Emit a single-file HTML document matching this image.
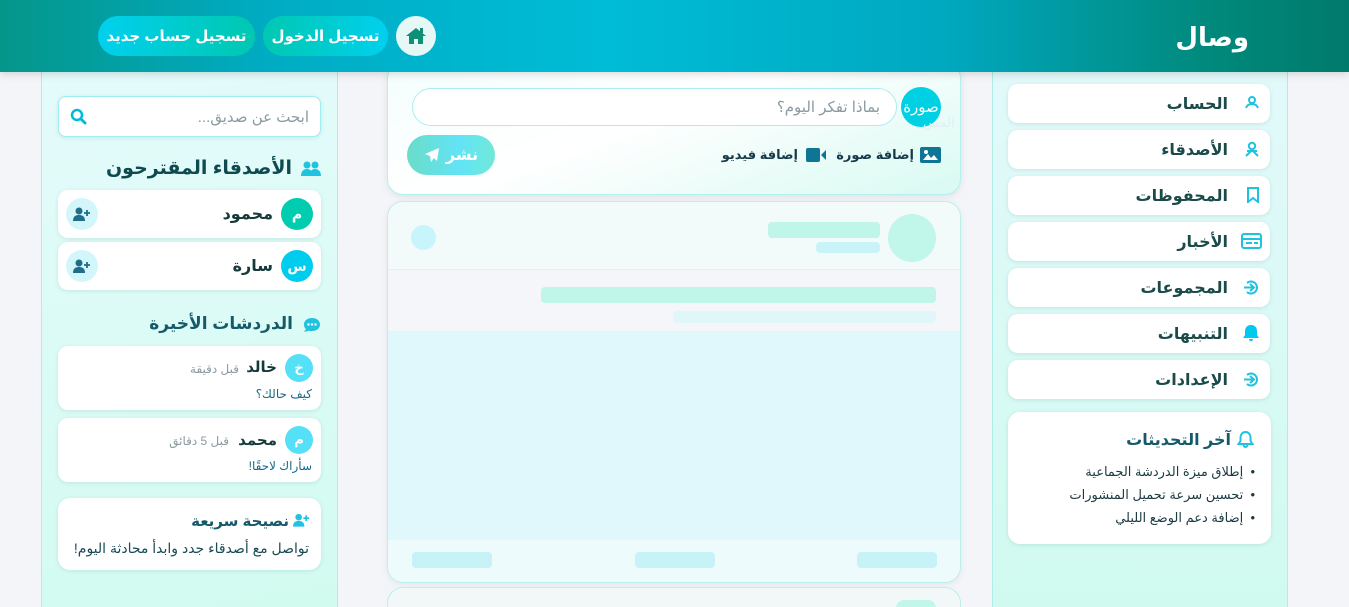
<!DOCTYPE html>
<html lang="ar" dir="rtl"><head><meta charset="utf-8">
<style>
*{box-sizing:border-box;margin:0;padding:0}
html{width:1349px;height:607px;overflow:hidden}
body{width:1349px;height:607px;overflow:hidden;background:#f3f5f9;font-family:"Liberation Sans","Noto Sans CJK SC","DejaVu Sans",sans-serif;position:relative;color:#134e4a}
.a{position:absolute}
header{position:absolute;left:0;top:0;width:1349px;height:72px;background:linear-gradient(90deg,#05968a 0%,#00acc4 20%,#00bcd6 45%,#00a8c0 70%,#00897b 90%,#007a6c 100%);box-shadow:0 2px 8px rgba(0,0,0,.15);z-index:5}
.logo{right:100px;top:22px;color:#fff;font-size:26px;font-weight:bold}
.btn{top:16px;height:40px;border-radius:20px;color:#fff;font-weight:bold;font-size:15px;display:flex;align-items:center;justify-content:center;background:linear-gradient(90deg,#00c8b0,#00d0ee)}
.side{background:linear-gradient(170deg,#e4fbfb,#d2fbf0);border-left:1px solid #aeeee6;border-right:1px solid #aeeee6}
.card{background:#fff;border-radius:10px;box-shadow:0 1px 4px rgba(0,80,80,.12)}
.nav{right:79px;width:262px;height:39px;display:flex;align-items:center;padding-right:42px;font-size:16px;font-weight:bold;color:#1a4a4a}
.nav svg{position:absolute;right:10px;top:11px}
.av{border-radius:50%;color:#fff;display:flex;align-items:center;justify-content:center;font-weight:bold}
.sk{border-radius:4px}
</style></head><body>
<header>
<div class="a logo">وصال</div>
<div class="a av" style="left:396px;top:16px;width:40px;height:40px;background:#e6f8f6">
<svg width="22" height="20" viewBox="0 0 22 20"><path d="M11 2L1 10h3v8h5v-5h4v5h5v-8h3z" fill="#0f8f78"/><rect x="15" y="2" width="3" height="5" fill="#0f8f78"/></svg></div>
<div class="a btn" style="left:263px;width:125px">تسجيل الدخول</div>
<div class="a btn" style="left:98px;width:157px;background:linear-gradient(90deg,#00d0ee,#00c8b0)">تسجيل حساب جديد</div>
</header>

<div class="a side" style="left:41px;top:72px;width:297px;height:535px"></div>
<div class="a card" style="left:58px;top:96px;width:263px;height:41px;border:1px solid #9eeef2;border-radius:8px"></div>
<div class="a" style="right:1040px;top:108px;font-size:15px;color:#8a9aa0">ابحث عن صديق...</div>
<svg class="a" style="left:70px;top:108px" width="17" height="17" viewBox="0 0 17 17"><circle cx="7" cy="7" r="5" stroke="#00bcd8" stroke-width="2.5" fill="none"/><path d="M11 11l4 4" stroke="#00bcd8" stroke-width="3" stroke-linecap="round"/></svg>
<svg class="a" style="left:301px;top:161px" width="20" height="16" viewBox="0 0 20 16"><circle cx="6" cy="4" r="3.5" fill="#1fc3e0"/><circle cx="14" cy="4" r="3.5" fill="#1fc3e0"/><path d="M0 15c0-5 3-7 6-7s6 2 6 7zM9 15c0-5 2-7 5-7s6 2 6 7z" fill="#1fc3e0"/></svg>
<div class="a" style="right:1057px;top:157px;font-size:19px;font-weight:bold;color:#0e4a4f">الأصدقاء المقترحون</div>

<div class="a card" style="left:58px;top:190px;width:263px;height:48px"></div>
<div class="a av" style="left:281px;top:198px;width:32px;height:32px;background:#00cdb0;font-size:14px">م</div>
<div class="a" style="right:1076px;top:204px;font-size:16px;font-weight:bold;color:#163a3a">محمود</div>
<div class="a av" style="left:66px;top:198px;width:32px;height:32px;background:#d3f6fb"><svg width="18" height="14" viewBox="0 0 18 14"><circle cx="6" cy="4" r="3.5" fill="#1f6d8a"/><path d="M0 14c0-5 3-6 6-6s6 1 6 6z" fill="#1f6d8a"/><path d="M14 3v6M11 6h6" stroke="#1f6d8a" stroke-width="1.8"/></svg></div>

<div class="a card" style="left:58px;top:242px;width:263px;height:48px"></div>
<div class="a av" style="left:281px;top:250px;width:32px;height:32px;background:#00cdee;font-size:14px">س</div>
<div class="a" style="right:1076px;top:256px;font-size:16px;font-weight:bold;color:#163a3a">سارة</div>
<div class="a av" style="left:66px;top:250px;width:32px;height:32px;background:#d3f6fb"><svg width="18" height="14" viewBox="0 0 18 14"><circle cx="6" cy="4" r="3.5" fill="#1f6d8a"/><path d="M0 14c0-5 3-6 6-6s6 1 6 6z" fill="#1f6d8a"/><path d="M14 3v6M11 6h6" stroke="#1f6d8a" stroke-width="1.8"/></svg></div>

<svg class="a" style="left:303px;top:317px" width="18" height="16" viewBox="0 0 18 16"><path d="M9 1c5 0 8 3 8 6.5S14 14 9 14c-1 0-2 0-3-.3L1 15l2-3C1.6 11 1 9 1 7.5 1 4 4 1 9 1z" fill="#1fc3e0"/><circle cx="5.5" cy="7.5" r="1.2" fill="#fff"/><circle cx="9" cy="7.5" r="1.2" fill="#fff"/><circle cx="12.5" cy="7.5" r="1.2" fill="#fff"/></svg>
<div class="a" style="right:1056px;top:314px;font-size:17px;font-weight:bold;color:#155a6a">الدردشات الأخيرة</div>

<div class="a card" style="left:58px;top:346px;width:263px;height:64px"></div>
<div class="a av" style="left:285px;top:354px;width:28px;height:28px;background:#55e0f8;font-size:13px">خ</div>
<div class="a" style="right:1072px;top:358px;font-size:15px;font-weight:bold;color:#163a3a">خالد</div>
<div class="a" style="right:1110px;top:362px;font-size:12px;color:#8a9aa0">قبل دقيقة</div>
<div class="a" style="right:1037px;top:387px;font-size:12px;color:#156a8a">كيف حالك؟</div>

<div class="a card" style="left:58px;top:418px;width:263px;height:64px"></div>
<div class="a av" style="left:285px;top:426px;width:28px;height:28px;background:#55e0f8;font-size:13px">م</div>
<div class="a" style="right:1072px;top:431px;font-size:15px;font-weight:bold;color:#163a3a">محمد</div>
<div class="a" style="right:1120px;top:434px;font-size:12px;color:#8a9aa0">قبل 5 دقائق</div>
<div class="a" style="right:1037px;top:459px;font-size:12px;color:#156a8a">سأراك لاحقًا!</div>

<div class="a card" style="left:58px;top:498px;width:263px;height:72px;border-radius:12px"></div>
<svg class="a" style="left:293px;top:513px" width="17" height="14" viewBox="0 0 18 14"><circle cx="6" cy="4" r="3.5" fill="#1fc3e0"/><path d="M0 14c0-5 3-6 6-6s6 1 6 6z" fill="#1fc3e0"/><path d="M14 2v6M11 5h6" stroke="#1fc3e0" stroke-width="1.8"/></svg>
<div class="a" style="right:1060px;top:512px;font-size:15px;font-weight:bold;color:#155a6a">نصيحة سريعة</div>
<div class="a" style="right:1040px;top:540px;font-size:14px;color:#1a4a55">تواصل مع أصدقاء جدد وابدأ محادثة اليوم!</div>

<div class="a" style="left:387px;top:62px;width:574px;height:133px;border-radius:16px;border:1px solid #b3f0ef;background:linear-gradient(160deg,#f4fefd 0%,#ffffff 45%,#d8faf2 100%);box-shadow:0 2px 8px rgba(0,0,0,.08)"></div>
<div class="a" style="left:412px;top:88px;width:485px;height:38px;border-radius:19px;background:#fff;border:1px solid #a8eef2"></div>
<div class="a" style="right:469px;top:98px;font-size:15px;color:#8a9aa0">بماذا تفكر اليوم؟</div>
<div class="a av" style="left:901px;top:87px;width:40px;height:40px;background:#00d0e4;font-weight:normal;font-size:15px">صورة</div>
<div class="a" style="left:923px;top:115px;font-size:13px;color:#e0f0f0">المس</div>
<svg class="a" style="left:920px;top:147px" width="21" height="16" viewBox="0 0 21 16"><rect width="21" height="16" rx="2" fill="#0e7595"/><path d="M3 13l5-6 3 4 3-3 4 5z" fill="#fff"/><circle cx="6" cy="5" r="2" fill="#fff"/></svg>
<div class="a" style="left:836px;width:78px;text-align:right;top:147px;font-size:13px;font-weight:bold;color:#163a4a;white-space:nowrap">إضافة صورة</div>
<svg class="a" style="left:806px;top:148px" width="20" height="14" viewBox="0 0 20 14"><rect width="14" height="14" rx="2" fill="#0e7595"/><path d="M15 7l5-5v10z" fill="#0e7595"/></svg>
<div class="a" style="left:722px;width:76px;text-align:right;top:147px;font-size:13px;font-weight:bold;color:#163a4a;white-space:nowrap">إضافة فيديو</div>
<div class="a" style="left:407px;top:135px;width:88px;height:40px;border-radius:20px;background:linear-gradient(90deg,#6adcc8,#62e4f6 60%,#70e8d8);color:#fff;font-weight:bold;font-size:16px;display:flex;align-items:center;justify-content:center;gap:6px">نشر <svg width="16" height="16" viewBox="0 0 16 16"><path d="M15 1L1 7l5 2 1 6 3-4 3 3z" fill="#fff"/></svg></div>

<div class="a" style="left:387px;top:201px;width:574px;height:382px;border-radius:16px;border:1px solid #b9f0ea;background:#f4f6fa;overflow:hidden;box-shadow:0 2px 8px rgba(0,0,0,.06)">
<div class="a" style="left:0;top:0;width:574px;height:68px;background:#f2fafa;border-bottom:1px solid #e6eeee"></div>
<div class="a" style="right:24px;top:12px;width:48px;height:48px;border-radius:50%;background:#c1f6ea"></div>
<div class="a sk" style="right:80px;top:20px;width:112px;height:16px;background:#c0f6ea"></div>
<div class="a sk" style="right:80px;top:40px;width:64px;height:11px;background:#c8f4f8"></div>
<div class="a" style="left:23px;top:23px;width:25px;height:25px;border-radius:50%;background:#c8f4fb"></div>
<div class="a sk" style="right:24px;top:85px;width:395px;height:16px;background:#c0f6ea"></div>
<div class="a sk" style="right:24px;top:109px;width:263px;height:12px;background:#e0f7fa"></div>
<div class="a" style="left:0;top:129px;width:574px;height:209px;background:#e0f8fc"></div>
<div class="a" style="left:0;top:338px;width:574px;height:44px;background:#eefbfc"></div>
<div class="a sk" style="left:24px;top:350px;width:80px;height:16px;background:#c6f2f8"></div>
<div class="a sk" style="left:247px;top:350px;width:80px;height:16px;background:#c6f2f8"></div>
<div class="a sk" style="left:469px;top:350px;width:80px;height:16px;background:#c6f2f8"></div>
</div>
<div class="a" style="left:387px;top:587px;width:574px;height:20px;border-radius:16px 16px 0 0;border:1px solid #b9f0ea;border-bottom:none;background:#f2f8f8;overflow:hidden">
<div class="a" style="right:24px;top:12px;width:40px;height:8px;border-radius:20px 20px 0 0;background:#c1f6ea"></div></div>

<div class="a side" style="left:992px;top:72px;width:296px;height:535px;background:linear-gradient(180deg,#e2f9fa,#d0faf0)"></div>
<div class="a card nav" style="top:84px">الحساب<svg width="16" height="14" viewBox="0 0 16 14"><circle cx="8" cy="5" r="3" stroke="#1fc3e0" stroke-width="2" fill="none"/><path d="M2 13c1-3 3-4 6-4s5 1 6 4" stroke="#1fc3e0" stroke-width="2" fill="none"/></svg></div>
<div class="a card nav" style="top:130px">الأصدقاء<svg width="16" height="16" viewBox="0 0 16 16"><circle cx="8" cy="5" r="3.2" stroke="#1fc3e0" stroke-width="2" fill="none"/><path d="M2 15l6-6 6 6M3 10l10 0" stroke="#1fc3e0" stroke-width="2" fill="none"/></svg></div>
<div class="a card nav" style="top:176px">المحفوظات<svg width="14" height="16" viewBox="0 0 14 16"><path d="M2 1h10v14l-5-4-5 4z" stroke="#1fc3e0" stroke-width="2" fill="none"/></svg></div>
<div class="a card nav" style="top:222px">الأخبار<svg width="21" height="16" viewBox="0 0 21 16" style="right:8px"><rect x="1" y="1" width="19" height="14" rx="2" stroke="#1fc3e0" stroke-width="2" fill="none"/><path d="M1 6h19M5 10h6M13 10h4" stroke="#1fc3e0" stroke-width="2"/></svg></div>
<div class="a card nav" style="top:268px">المجموعات<svg width="17" height="17" viewBox="0 0 17 17"><path d="M4 4a6 6 0 1 1 0 9" stroke="#1fc3e0" stroke-width="2" fill="none"/><path d="M1 8.5h9M7 5l4 3.5-4 3.5" stroke="#1fc3e0" stroke-width="2" fill="none"/></svg></div>
<div class="a card nav" style="top:314px">التنبيهات<svg width="18" height="18" viewBox="0 0 18 18" style="top:10px"><path d="M9 1c4 0 6 3 6 6v4l2 3H1l2-3V7c0-3 2-6 6-6z" fill="#00c8ee"/><path d="M7 15a2 2 0 0 0 4 0z" fill="#00c8ee"/></svg></div>
<div class="a card nav" style="top:360px">الإعدادات<svg width="17" height="17" viewBox="0 0 17 17"><path d="M4 4a6 6 0 1 1 0 9" stroke="#1fc3e0" stroke-width="2" fill="none"/><path d="M1 8.5h9M7 5l4 3.5-4 3.5" stroke="#1fc3e0" stroke-width="2" fill="none"/></svg></div>

<div class="a card" style="left:1008px;top:412px;width:263px;height:132px;border-radius:12px"></div>
<svg class="a" style="left:1237px;top:430px" width="17" height="18" viewBox="0 0 17 18"><path d="M8.5 2c3.5 0 5 3 5 5.5v3.5l2 3H1.5l2-3V7.5C3.5 5 5 2 8.5 2z" stroke="#1fc3e0" stroke-width="2" fill="none"/><path d="M6.5 15a2 2 0 0 0 4 0" stroke="#1fc3e0" stroke-width="2" fill="none"/></svg>
<div class="a" style="right:118px;top:430px;font-size:16px;font-weight:bold;color:#155a6a">آخر التحديثات</div>
<div class="a" style="right:94px;top:460px;font-size:13px;color:#1a3a40;line-height:23px">
<div>• &nbsp;إطلاق ميزة الدردشة الجماعية</div>
<div>• &nbsp;تحسين سرعة تحميل المنشورات</div>
<div>• &nbsp;إضافة دعم الوضع الليلي</div>
</div>
</body></html>
